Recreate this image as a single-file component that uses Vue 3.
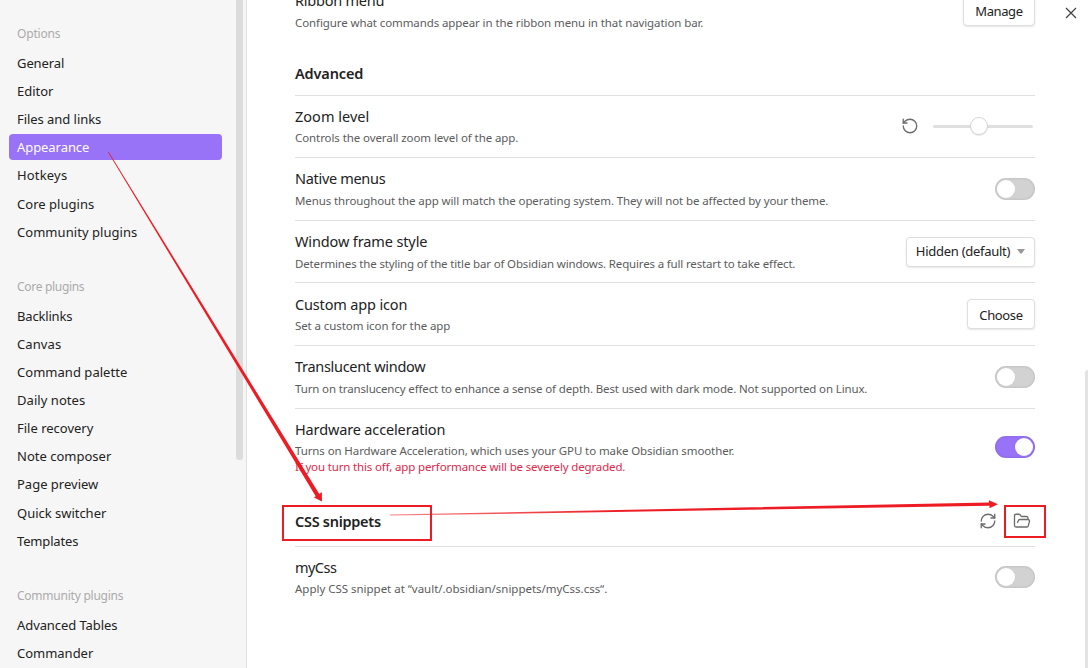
<script setup>
const groups = [
  { title: 'Options', w: 43, items: [['General', 47], ['Editor', 36], ['Files and links', 84], ['Appearance', 72], ['Hotkeys', 50], ['Core plugins', 77], ['Community plugins', 120]] },
  { title: 'Core plugins', w: 67, items: [['Backlinks', 55], ['Canvas', 44], ['Command palette', 110], ['Daily notes', 68], ['File recovery', 76], ['Note composer', 94], ['Page preview', 81], ['Quick switcher', 89], ['Templates', 61]] },
  { title: 'Community plugins', w: 106, items: [['Advanced Tables', 100], ['Commander', 76]] }
]

const rows = [
  { name: 'Zoom level', nw: 74, desc: 'Controls the overall zoom level of the app.', dw: 223, kind: 'slider', h: 62, tight: true },
  { name: 'Native menus', nw: 90, desc: 'Menus throughout the app will match the operating system. They will not be affected by your theme.', dw: 533, kind: 'toggle', h: 63 },
  { name: 'Window frame style', nw: 132, desc: 'Determines the styling of the title bar of Obsidian windows. Requires a full restart to take effect.', dw: 500, kind: 'select', h: 62 },
  { name: 'Custom app icon', nw: 112, desc: 'Set a custom icon for the app', dw: 155, kind: 'button', h: 63, tight: true, low: true },
  { name: 'Translucent window', nw: 130, desc: 'Turn on translucency effect to enhance a sense of depth. Best used with dark mode. Not supported on Linux.', dw: 572, kind: 'toggle', h: 63 },
  { name: 'Hardware acceleration', nw: 150, desc: 'Turns on Hardware Acceleration, which uses your GPU to make Obsidian smoother.', dw: 439, warn: 'If you turn this off, app performance will be severely degraded.', ww: 330, kind: 'toggle', on: true, h: 88, tight: true }
]

// Spreads a label's letters so that it takes the given width.
const vFit = {
  mounted(el, { value }) {
    const natural = el.getBoundingClientRect().width
    el.style.letterSpacing = (value + 0.3 - natural) / el.textContent.length + 'px'
  }
}
</script>

<template>
  <div class="settings">
    <aside class="sidebar">
      <section v-for="g in groups" :key="g.title" class="group">
        <h3 class="group-title"><span v-fit="g.w">{{ g.title }}</span></h3>
        <div v-for="i in g.items" :key="i[0]" class="nav" :class="{ active: i[0] === 'Appearance' }">
          <span v-fit="i[1]">{{ i[0] }}</span>
        </div>
      </section>
      <div class="side-thumb"></div>
    </aside>

    <main class="content">
      <div class="row first">
        <div class="info">
          <div class="name"><span v-fit="89">Ribbon menu</span></div>
          <div class="desc"><span v-fit="408">Configure what commands appear in the ribbon menu in that navigation bar.</span></div>
        </div>
        <button class="btn manage"><span v-fit="47">Manage</span></button>
      </div>
      <h2 class="heading advanced"><span v-fit="68">Advanced</span></h2>

      <div v-for="r in rows" :key="r.name" class="row" :class="{ tight: r.tight, low: r.low }" :style="{ height: r.h + 'px' }">
        <div class="info">
          <div class="name"><span v-fit="r.nw">{{ r.name }}</span></div>
          <div class="desc"><span v-fit="r.dw">{{ r.desc }}</span></div>
          <div v-if="r.warn" class="desc warn"><span v-fit="r.ww">{{ r.warn }}</span></div>
        </div>
        <div v-if="r.kind === 'slider'" class="control slider-control">
          <svg class="icon" width="18" height="18" viewBox="0 0 24 24"><path d="M3 12a9 9 0 1 0 9-9 9.75 9.75 0 0 0-6.74 2.74L3 8" /><path d="M3 3v5h5" /></svg>
          <div class="slider"><i></i></div>
        </div>
        <div v-else-if="r.kind === 'toggle'" class="control toggle" :class="{ on: r.on }"><i></i></div>
        <button v-else-if="r.kind === 'select'" class="btn select">
          <span v-fit="94">Hidden (default)</span>
          <svg width="8" height="5" viewBox="0 0 8 5"><path d="M0 0h8L4.700 4.500h-1.400z" fill="#999" /></svg>
        </button>
        <button v-else class="btn choose"><span v-fit="43">Choose</span></button>
      </div>

      <div class="snippet-head">
        <h2 class="heading"><span v-fit="85.5">CSS snippets</span></h2>
        <div class="actions">
          <svg class="icon" width="18" height="18" viewBox="0 0 24 24"><path d="M3 12a9 9 0 0 1 9-9 9.750 9.750 0 0 1 6.740 2.740L21 8" /><path d="M21 3v5h-5" /><path d="M21 12a9 9 0 0 1-9 9 9.750 9.750 0 0 1-6.740-2.740L3 16" /><path d="M8 16H3v5" /></svg>
          <svg class="icon" width="18" height="18" viewBox="0 0 24 24"><path d="m6 14 1.450-2.900A2 2 0 0 1 9.240 10H20a2 2 0 0 1 1.940 2.500l-1.550 6a2 2 0 0 1-1.940 1.500H4a2 2 0 0 1-2-2V5c0-1.100.9-2 2-2h3.930a2 2 0 0 1 1.660.9l.82 1.200a2 2 0 0 0 1.660.9H18a2 2 0 0 1 2 2v2" /></svg>
        </div>
      </div>
      <div class="row tight last">
        <div class="info">
          <div class="name"><span v-fit="41">myCss</span></div>
          <div class="desc"><span v-fit="312">Apply CSS snippet at “vault/.obsidian/snippets/myCss.css“.</span></div>
        </div>
        <div class="control toggle"><i></i></div>
      </div>
    </main>

    <svg class="close" width="12" height="12" viewBox="0 0 12 12"><path d="M1 1l10 10M11 1L1 11" /></svg>
    <div class="page-thumb"></div>

    <svg class="notes" width="1088" height="668" viewBox="0 0 1088 668">
      <defs>
        <linearGradient id="fade" gradientUnits="userSpaceOnUse" x1="390" y1="0" x2="620" y2="0">
          <stop offset="0" stop-color="#ed1c24" stop-opacity=".55" />
          <stop offset="1" stop-color="#ed1c24" />
        </linearGradient>
      </defs>
      <path d="M108 152.200L315.700 496.200L314 497.500L322 501.500L321.800 492L319.300 494L108.600 151.800z" fill="#ed1c24" />
      <path d="M390 514.600L989 502.500V500.200L998 504.200L989.500 508.300V505.800L390 515.600z" fill="url(#fade)" />
      <rect x="283" y="506" width="148" height="34" />
      <rect x="1005" y="506" width="40" height="31" />
    </svg>
  </div>
</template>

<style>
body { margin: 0; overflow: hidden; }
</style>

<style scoped>
.settings {
  position: relative;
  display: flex;
  width: 1088px;
  height: 668px;
  overflow: hidden;
  background: #fff;
  color: #222;
  font-family: "Noto Sans", "Open Sans", sans-serif;
}
.settings * { box-sizing: border-box; }
.settings span { white-space: nowrap; display: inline-block; }
.sidebar {
  position: relative;
  flex: none;
  width: 247px;
  height: 668px;
  padding: 21px 0 0 9px;
  overflow: hidden;
  background: #f6f6f6;
  border-right: 1px solid #e0e0e0;
}
.group { margin-bottom: 29.130px; }
.group-title {
  margin: 0 0 3px;
  padding-left: 8px;
  height: 26px;
  line-height: 26px;
  font-size: 12px;
  font-weight: 400;
  color: #ababab;
}
.nav {
  width: 213px;
  height: 26px;
  margin-bottom: 2.110px;
  padding-left: 8px;
  border-radius: 4px;
  font-size: 13px;
  line-height: 26px;
}
.nav.active { background: #9873f7; color: #fff; }
.side-thumb {
  position: absolute;
  left: 236px;
  top: -10px;
  width: 7px;
  height: 470px;
  border-radius: 3px;
  background: #dcdcdc;
}
.content {
  width: 740px;
  margin-left: 48px;
}
.row {
  display: flex;
  justify-content: space-between;
  align-items: flex-start;
  height: 62px;
  border-top: 1px solid #e0e0e0;
}
.info { padding-top: 9px; }
.name { height: 23px; line-height: 22px; font-size: 14.500px; }
.tight .name { height: 22px; }
.low .info { padding-top: 10px; }
.desc { height: 16px; line-height: 21px; font-size: 11.500px; color: #5c5c5c; }
.warn { color: #e0284a; }
.first { height: 48px; border: 0; }
.first .info { margin-top: -20px; }
.heading { margin: 0; font-size: 14.500px; font-weight: 600; line-height: 22px; }
.advanced { height: 47px; padding-top: 14px; }
.control { margin-top: 20px; }
.last .control { margin-top: 19px; }
.toggle.on { margin-top: 27px; }
.slider-control { display: flex; align-items: center; gap: 14px; height: 20px; }
.slider {
  width: 100px;
  height: 3px;
  margin-right: 2px;
  border-radius: 2px;
  background: #dfdfdf;
}
.slider i {
  display: block;
  width: 18px;
  height: 18px;
  margin: -8px 0 0 37px;
  border: 1px solid #d6d6d6;
  border-radius: 50%;
  background: #fff;
  box-shadow: 0 1px 1px rgba(0, 0, 0, .1);
}
.toggle {
  width: 40px;
  height: 22px;
  padding: 2px;
  border-radius: 11px;
  background: #d2d2d2;
  box-shadow: inset 0 0 3px rgba(0, 0, 0, .15);
}
.toggle i { display: block; width: 18px; height: 18px; border-radius: 50%; background: #fff; }
.toggle.on { background: #9873f7; }
.toggle.on i { margin-left: 18px; }
.btn {
  display: flex;
  align-items: center;
  justify-content: center;
  height: 30px;
  padding: 0;
  border: 1px solid #dedede;
  border-radius: 4px;
  background: #fff;
  color: #222;
  font: 13px "Noto Sans", "Open Sans", sans-serif;
  box-shadow: 0 1px 2px rgba(0, 0, 0, .1);
}
.manage { width: 72px; margin-top: -4px; }
.select { width: 129px; margin-top: 16px; padding-bottom: 2px; gap: 7px; }
.choose { width: 68px; margin-top: 16px; padding-top: 2px; }
.icon { display: block; fill: none; stroke: #6b6b6b; stroke-width: 1.750; stroke-linecap: round; stroke-linejoin: round; }
.snippet-head { display: flex; justify-content: space-between; height: 50px; padding-top: 14px; }
.actions { display: flex; gap: 16px; padding: 2px 4px 0 0; }
.close { position: absolute; left: 1065px; top: 7px; fill: none; stroke: #444; stroke-width: 1.300; }
.page-thumb { position: absolute; left: 1085px; top: 370px; width: 7px; height: 310px; border-radius: 3px; background: #e3e3e3; }
.notes { position: absolute; left: 0; top: 0; pointer-events: none; }
.notes rect { fill: none; stroke: #ed1c24; stroke-width: 2; }
</style>
